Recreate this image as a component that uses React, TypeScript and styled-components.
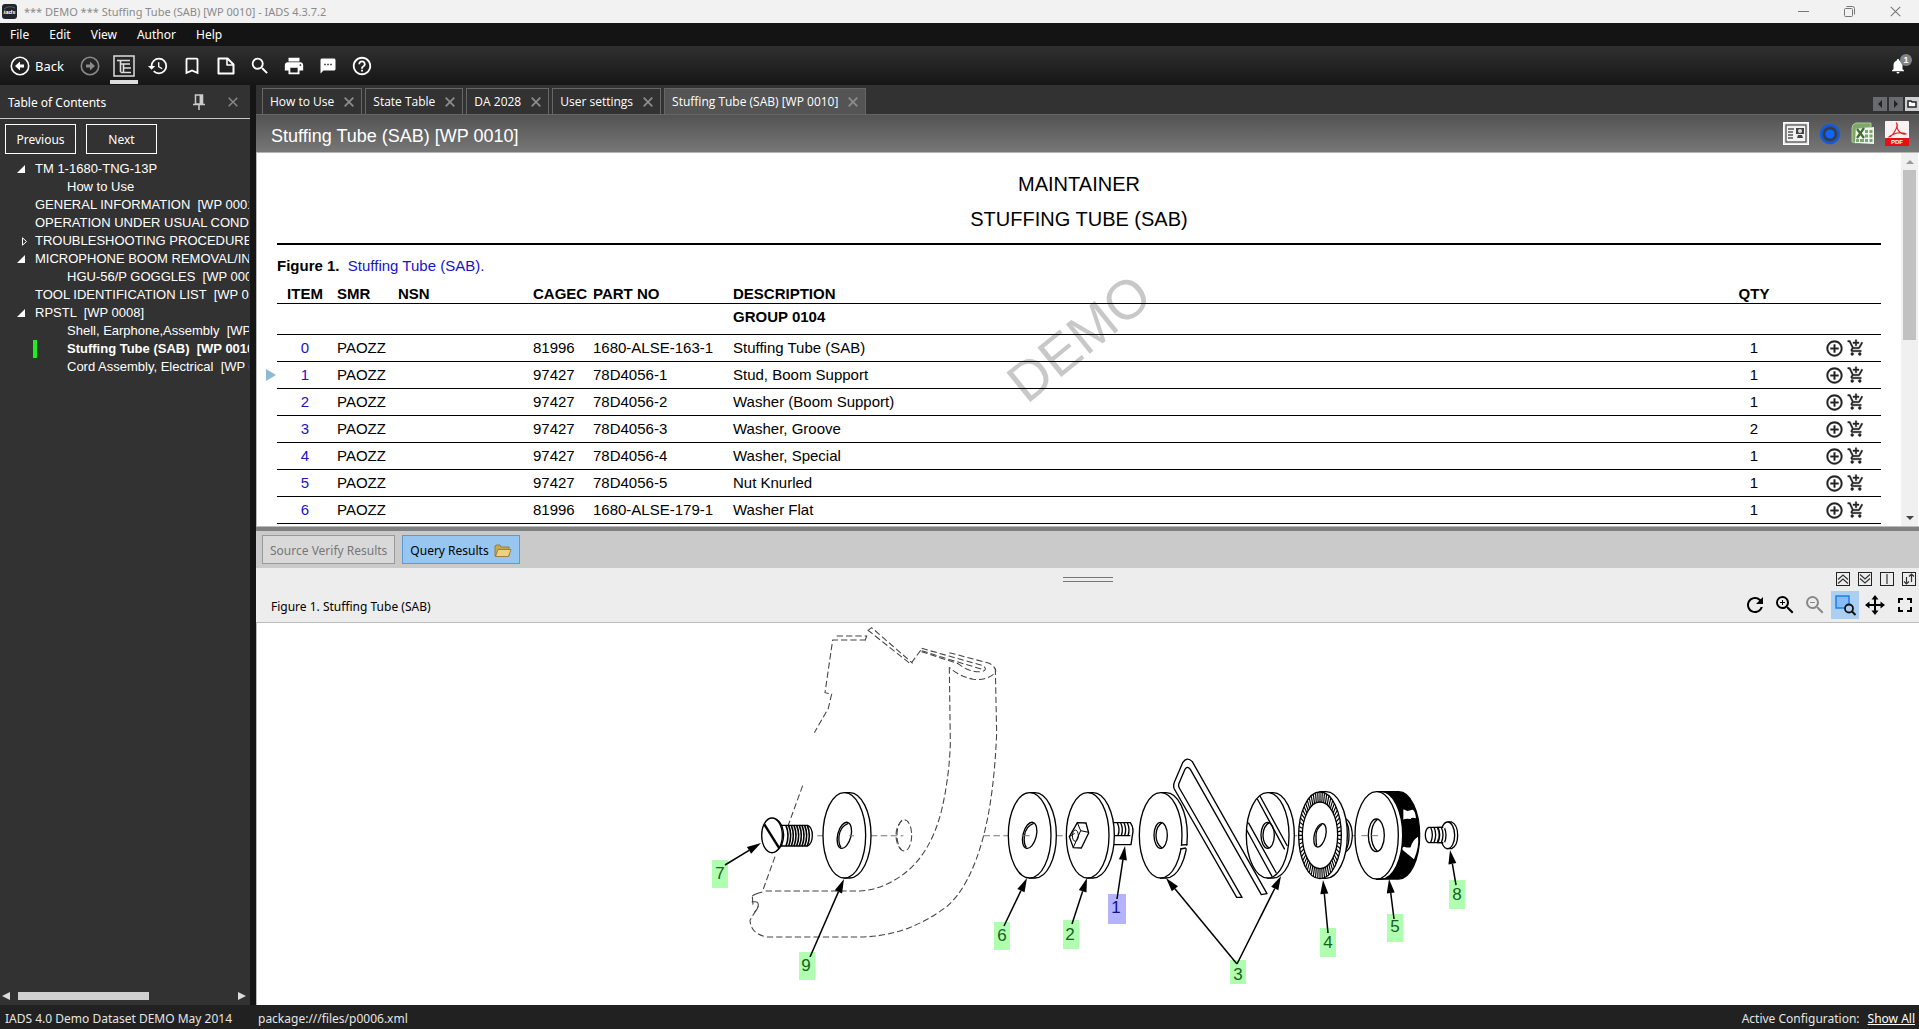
import React from "react";
import styled, { createGlobalStyle, css } from "styled-components";
import {
  MdHistory,
  MdBookmarkBorder,
  MdSearch,
  MdPrint,
  MdSms,
  MdHelpOutline,
  MdNotifications,
  MdAddCircleOutline,
  MdAddShoppingCart,
  MdRefresh,
  MdZoomIn,
  MdZoomOut,
} from "react-icons/md";

const UI = `"Noto Sans", "Open Sans", sans-serif`;
const UI_NARROW = `"Open Sans", "Noto Sans", sans-serif`;
const ARIAL = `"Liberation Sans", Arial, sans-serif`;

const Global = createGlobalStyle`
  * { box-sizing: border-box; }
  html, body, #root { height: 100%; margin: 0; }
  body { font: 12px/16px ${UI}; overflow: hidden; }
  button { font: inherit; color: inherit; background: none; border: 0; padding: 0; margin: 0; }
  a { color: inherit; text-decoration: none; }
  svg { display: block; flex: none; }
`;

const Window = styled.div`
  display: flex;
  flex-direction: column;
  height: 100vh;
  background: #151515;
  color: #fff;
`;

const TitleBar = styled.header`
  display: flex;
  align-items: center;
  gap: 7px;
  height: 23px;
  padding: 0 18px 0 2px;
  background: #f2f2f2;
  color: #8a8a8a;
  font: 11px/16px ${UI};
`;

const WindowControls = styled.div`
  display: flex;
  align-items: center;
  gap: 35px;
  margin-left: auto;
`;

const WindowButton = styled.button`
  display: grid;
  place-items: center;
  width: 11px;
  height: 11px;
  color: #777;
`;

const MenuBar = styled.nav`
  display: flex;
  align-items: center;
  gap: 20px;
  height: 23px;
  padding: 0 10px;
  background: #141414;
`;

const Toolbar = styled.div`
  display: flex;
  align-items: stretch;
  height: 39px;
  background: linear-gradient(#303030, #161616);
`;

const BackButton = styled.button`
  display: flex;
  align-items: center;
  gap: 5px;
  padding: 0 0 0 10px;
  width: 73px;
  font-size: 13px;
`;

const ToolButton = styled.button<{ $active?: boolean; $dim?: boolean }>`
  display: flex;
  align-items: center;
  justify-content: center;
  width: 34px;
  color: ${(p) => (p.$dim ? "#8a8a8a" : "#fff")};
  ${(p) =>
    p.$active &&
    css`
      background: linear-gradient(#ddd, #ddd) center bottom 1px / 28px 4px no-repeat;
    `}
`;

const Bell = styled.button`
  position: relative;
  display: grid;
  place-items: center;
  width: 18px;
  margin: 0 12px 0 auto;
`;

const Badge = styled.span`
  position: absolute;
  top: 8px;
  right: -5px;
  width: 12px;
  height: 12px;
  border-radius: 50%;
  background: #808488;
  font: bold 9px/12px ${ARIAL};
  text-align: center;
`;

const Body = styled.div`
  display: flex;
  flex: 1;
  min-height: 0;
  gap: 6px;
`;

const Sidebar = styled.aside`
  display: flex;
  flex-direction: column;
  width: 250px;
  flex: none;
  background: #323232;
`;

const SidebarHead = styled.div`
  display: flex;
  align-items: center;
  height: 34px;
  padding: 0 12px 0 8px;
  border-bottom: 1px solid #c8c8c8;
`;

const SidebarTitle = styled.h2`
  margin: 0 auto 0 0;
  padding-top: 2px;
  font-size: 12px;
  font-weight: 400;
`;

const IconButton = styled.button<{ $gap?: number }>`
  display: grid;
  place-items: center;
  margin-left: ${(p) => p.$gap ?? 0}px;
  color: #8c8c8c;
`;

const NavButtons = styled.div`
  display: flex;
  gap: 10px;
  padding: 5px 5px 6px;
`;

const NavButton = styled.button`
  width: 71px;
  height: 30px;
  padding-top: 2px;
  border: 1px solid #fff;
`;

const Tree = styled.ul`
  flex: 1;
  margin: 0 1px 0 0;
  padding: 0;
  list-style: none;
  overflow: hidden;
  font: 13px/18px ${ARIAL};
`;

const TreeRow = styled.li<{ $level: number; $current?: boolean }>`
  display: flex;
  align-items: center;
  height: 18px;
  white-space: pre;
  font-weight: ${(p) => (p.$current ? 700 : 400)};
  a {
    margin-left: ${(p) => (p.$level ? 32 : 0)}px;
  }
  ${(p) =>
    p.$current &&
    css`
      background: linear-gradient(#1cf01c, #1cf01c) 33px 0 / 4px 18px no-repeat;
    `}
`;

const Twisty = styled.span`
  display: flex;
  justify-content: center;
  width: 35px;
  padding-left: 6px;
  flex: none;
`;

const HScroll = styled.div`
  display: flex;
  align-items: center;
  gap: 8px;
  height: 19px;
  padding: 0 4px 0 2px;
  color: #ddd;
`;

const HTrack = styled.div`
  flex: 1;
  div {
    width: 62%;
    height: 8px;
    background: #d0d0d0;
  }
`;

const Main = styled.main`
  display: flex;
  flex-direction: column;
  flex: 1;
  min-width: 0;
  background: #fff;
  color: #000;
`;

const TabStrip = styled.div`
  display: flex;
  align-items: flex-end;
  gap: 3px;
  height: 30px;
  flex: none;
  padding-left: 6px;
  background: #323232;
  border-bottom: 1px solid #666;
  color: #fff;
  font-family: ${UI_NARROW};
`;

const Tab = styled.div<{ $active?: boolean }>`
  display: flex;
  align-items: center;
  gap: 10px;
  height: 26px;
  padding: 1px 7px 0;
  border: 1px solid #666;
  border-bottom: 0;
  background: ${(p) => (p.$active ? "#545454" : "#323232")};
`;

const TabNav = styled.div`
  display: flex;
  gap: 2px;
  margin: 0 0 3px auto;
`;

const TabNavButton = styled.button<{ $light?: boolean }>`
  display: grid;
  place-items: center;
  width: 14px;
  height: 14px;
  background: ${(p) => (p.$light ? "#cdd0d3" : "#696b6e")};
  color: #222;
`;

const DocHeader = styled.div`
  display: flex;
  align-items: center;
  gap: 10px;
  height: 38px;
  flex: none;
  padding: 0 10px 0 15px;
  background: linear-gradient(#535353, #777);
  border-bottom: 1px solid #b5b5b5;
  color: #fff;
`;

const DocTitle = styled.h1`
  margin: 0 auto 0 0;
  padding-top: 4px;
  font: 18px/24px ${ARIAL};
`;

const DocPane = styled.div`
  display: flex;
  flex: 0 0 373px;
  border-left: 1px solid #bbb;
  overflow: hidden;
`;

const Doc = styled.article`
  position: relative;
  flex: 1;
  min-width: 0;
  padding: 13px 20px 0;
  font: 15px/18px ${ARIAL};
`;

const DocHeading = styled.h2`
  margin: 0 0 12px;
  font: 20px/23px ${ARIAL};
  padding-top: 7px;
  height: 23px;
  text-align: center;
`;

const Rule = styled.hr`
  height: 2px;
  margin: 19px 0 12px;
  border: 0;
  background: #000;
`;

const Caption = styled.p`
  margin: 0;
  white-space: pre;
  a {
    color: #1a12c8;
  }
`;

const Watermark = styled.div`
  position: absolute;
  left: 50%;
  top: 185px;
  transform: translate(-50%, -50%) rotate(-39deg);
  font: 55px/60px ${ARIAL};
  color: #c8c8c8;
`;

const Parts = styled.table`
  position: relative;
  width: 100%;
  margin-top: 10px;
  border-collapse: collapse;
  table-layout: fixed;
  th {
    height: 18px;
    padding: 0 4px;
    text-align: left;
    border-bottom: 1px solid #000;
  }
  td {
    height: 27px;
    padding: 0 4px;
    border-bottom: 1px solid #000;
    white-space: nowrap;
  }
  th:nth-child(1),
  td:nth-child(1),
  th:nth-child(7),
  td:nth-child(7) {
    text-align: center;
  }
`;

const GroupRow = styled.tr`
  && td {
    height: 31px;
    padding-bottom: 4px;
    font-weight: 700;
  }
`;

const ItemCell = styled.td`
  position: relative;
  a {
    color: #1a12c8;
  }
`;

const Marker = styled.span`
  position: absolute;
  left: -11px;
  top: 7px;
  border: 6px solid transparent;
  border-left: 10px solid #8fb9d3;
  border-right: 0;
`;

const RowActions = styled.div`
  display: flex;
  gap: 3px;
  justify-content: flex-end;
  padding-right: 12px;
  color: #222;
  path:not([fill="none"]) {
    stroke: currentColor;
    stroke-width: 0.5px;
  }
`;

const VScroll = styled.div`
  display: flex;
  flex-direction: column;
  align-items: center;
  gap: 6px;
  width: 18px;
  padding: 7px 2px 6px;
  background: #f0f0f0;
  border-right: 1px solid #fff;
`;

const VThumb = styled.div`
  width: 13px;
  height: 170px;
  margin-bottom: auto;
  background: #c1c1c1;
`;

const Splitter = styled.div`
  height: 5px;
  flex: none;
  background: #808080;
  border-top: 1px solid #bbb;
`;

const ResultsBar = styled.div`
  display: flex;
  gap: 7px;
  align-items: flex-start;
  height: 37px;
  flex: none;
  padding: 4px 6px;
  background: #cacaca;
`;

const ResultButton = styled.button<{ $on?: boolean }>`
  display: flex;
  align-items: center;
  gap: 5px;
  height: 29px;
  padding: 2px 7px 0;
  color: ${(p) => (p.$on ? "#000" : "#777")};
  background: ${(p) => (p.$on ? "#97c6f0" : "#d9d9d9")};
  border: 1px solid ${(p) => (p.$on ? "#5a9bd6" : "#999")};
`;

const FigureHead = styled.div`
  display: grid;
  grid-template-columns: 1fr auto 1fr;
  grid-template-rows: 22px 32px;
  height: 55px;
  flex: none;
  background: #ededed;
  border-bottom: 1px solid #bbb;
`;

const Grip = styled.div`
  grid-column: 2;
  align-self: center;
  width: 50px;
  height: 5px;
  border: 1px solid #777;
  border-width: 1px 0;
`;

const PaneButtons = styled.div`
  display: flex;
  justify-content: flex-end;
  align-items: flex-end;
  gap: 8px;
  padding: 0 3px 4px 0;
`;

const PaneButton = styled.button`
  width: 14px;
  height: 14px;
  border: 1px solid #222;
  color: #333;
`;

const FigureTitle = styled.div`
  grid-column: 1 / 3;
  align-self: center;
  padding: 2px 0 0 15px;
`;

const FigureTools = styled.div`
  display: flex;
  justify-content: flex-end;
  align-items: center;
  gap: 2px;
  padding-bottom: 2px;
`;

const FigureTool = styled.button<{ $on?: boolean; $dim?: boolean }>`
  display: grid;
  place-items: center;
  width: 28px;
  height: 28px;
  color: ${(p) => (p.$dim ? "#888" : "#000")};
  background: ${(p) => (p.$on ? "#abcff0" : "transparent")};
`;

const FigureArea = styled.figure`
  display: flex;
  justify-content: center;
  flex: 1;
  min-height: 0;
  margin: 0;
  border-left: 1px solid #bbb;
`;

const StatusBar = styled.footer`
  display: flex;
  align-items: center;
  height: 24px;
  padding: 3px 4px 0 5px;
  background: #212121;
  color: #e4e4e4;
  a {
    color: #fff;
    text-decoration: underline;
  }
`;

const Dataset = styled.span`
  min-width: 253px;
`;

const ActiveConfig = styled.span`
  display: flex;
  gap: 8px;
  margin-left: auto;
`;

/* ---------- small drawn icons ---------- */

const Logo = () => (
  <svg width="15" height="15" viewBox="0 0 15 15">
    <rect width="15" height="15" rx="3" fill="#20262b" />
    <path d="M2 5Q7 1 13 4" stroke="#59636b" fill="none" />
    <text x="7.500" y="10" fill="#fff" fontFamily="Liberation Sans" fontSize="6" fontWeight="700" fontStyle="italic" textAnchor="middle">iads</text>
  </svg>
);

const CircleArrow = ({ flip }: { flip?: boolean }) => (
  <svg width="20" height="20" viewBox="0 0 20 20" transform={flip ? "scale(-1 1)" : undefined}>
    <circle cx="10" cy="10" r="8.700" fill="none" stroke="currentColor" strokeWidth="1.600" />
    <path d="M5 10l5-4.500V8.500h4v3h-4v3z" fill="currentColor" />
  </svg>
);

const TocIcon = () => (
  <svg width="22" height="22" viewBox="0 0 22 22" fill="none" stroke="#ddd">
    <rect x="1" y="1" width="20" height="20" strokeWidth="1.500" />
    <path d="M4 5.500h13M7.500 5.500v11.500M7.500 9h9.500M10.500 9v8.500M10.500 13h7.500M7.500 17.500h10.500" strokeWidth="1.600" />
  </svg>
);

const PageIcon = () => (
  <svg width="18" height="18" viewBox="0 0 18 18" fill="none" stroke="currentColor" strokeWidth="2" strokeLinejoin="round">
    <path d="M1.500 1.500h9l6 6v9h-15z" />
    <path d="M10 2v6h6" strokeWidth="1.600" />
  </svg>
);

const Cross = ({ size = 9, w = 1.6 }: { size?: number; w?: number }) => (
  <svg width={size} height={size} viewBox="0 0 10 10" stroke="currentColor" strokeWidth={w}>
    <path d="M.7 .7l8.600 8.600M9.300 .7L.7 9.300" />
  </svg>
);

const Pin = () => (
  <svg width="12" height="16" viewBox="0 0 12 16" fill="none" stroke="#ccc" strokeWidth="1.500">
    <path d="M2.500 1h7v9h-7zM0 10.500h12M6 10.500V16" />
    <path d="M7.800 1v9" strokeWidth="2.500" />
  </svg>
);

const Tri = ({ d, size = 8 }: { d: string; size?: number }) => (
  <svg width={size} height={size} viewBox="0 0 8 8" fill="currentColor">
    <path d={d} />
  </svg>
);

const CardIcon = () => (
  <svg width="26" height="24" viewBox="0 0 26 24">
    <rect x=".5" y=".5" width="25" height="22" fill="#e8e8e8" stroke="#fff" />
    <rect x="3" y="3" width="20" height="17" fill="#f2f2f2" stroke="#444" strokeWidth="1.200" />
    <path d="M5 7h6M5 10h5M5 13h5M5 16h5" stroke="#555" strokeWidth="1.500" />
    <rect x="13" y="6" width="8" height="6" fill="#444" />
    <circle cx="17" cy="9" r="2" fill="#ddd" />
    <path d="M14 16l1-3h4l1 3z" fill="#444" />
  </svg>
);

const TargetIcon = () => (
  <svg width="22" height="24" viewBox="0 0 22 24">
    <circle cx="11" cy="12" r="9" fill="#444" stroke="#0e5be6" strokeWidth="2.600" />
    <circle cx="11" cy="12" r="6.600" fill="#333b4d" />
    <circle cx="11" cy="12" r="4.600" fill="#0f66ff" />
  </svg>
);

const SheetIcon = () => (
  <svg width="24" height="24" viewBox="0 0 24 24">
    <path d="M1 20V6q0-4 4-5h15v4l-15 2v14z" fill="#7fa769" stroke="#a9c998" />
    <path d="M5 7l18-2v17L4 21z" fill="#eef4ea" />
    <path d="M14 8h3v3h-3zM18.500 8h3v3h-3zM14 12.500h3v3h-3zM18.500 12.500h3v3h-3zM14 17h3v3h-3zM18.500 17h3v3h-3zM9 17h4v3H9zM5 17h3v3H5z" fill="#79a765" />
    <path d="M6 7l7 9M13 6L6 16" stroke="#3f6b34" strokeWidth="2.200" />
  </svg>
);

const PdfIcon = () => (
  <svg width="24" height="25" viewBox="0 0 24 25">
    <rect width="24" height="25" rx="1" fill="#f8f3f2" />
    <path d="M11 2q2 0 1 5 3 7 9 6-1-2-9-1-6 2-8 4 3 0 7-8 2-5 0-6z" fill="none" stroke="#e02020" strokeWidth="1.100" />
    <rect y="17" width="24" height="8" fill="#e60f14" />
    <text x="12" y="23" fill="#fff" fontFamily="Liberation Sans" fontSize="6" fontWeight="700" textAnchor="middle">PDF</text>
  </svg>
);

const FolderIcon = () => (
  <svg width="18" height="14" viewBox="0 0 18 14" stroke="#8a7430" strokeWidth=".8">
    <path d="M1 12V2l1-1h4l1 2h8v9z" fill="#c9a94d" />
    <path d="M1.500 12.500L4 5.500h13L14.500 12.500z" fill="#ecd182" />
  </svg>
);

const MarqueeIcon = () => (
  <svg width="24" height="24" viewBox="0 0 24 24" fill="none">
    <rect x="3" y="3" width="13" height="12" fill="#84bdf7" stroke="#1d80e8" strokeWidth="1.500" />
    <circle cx="16" cy="15.500" r="4" fill="#abcff0" stroke="#111" strokeWidth="1.800" />
    <path d="M19 18.500l3.500 3.500" stroke="#111" strokeWidth="2" />
  </svg>
);

const MoveIcon = () => (
  <svg width="20" height="20" viewBox="0 0 20 20" stroke="#000" strokeWidth="2" fill="#000">
    <path d="M2 10h16M10 2v16" />
    <path d="M10 0l3.500 4.500h-7zM10 20l3.500-4.500h-7zM0 10l4.500-3.500v7zM20 10l-4.500-3.500v7z" stroke="none" />
  </svg>
);

const FullIcon = () => (
  <svg width="14" height="14" viewBox="0 0 14 14" fill="none" stroke="#000" strokeWidth="2">
    <path d="M1 5V1h4M9 1h4v4M13 9v4H9M5 13H1V9" />
  </svg>
);

const PaneGlyph = ({ d }: { d: string }) => (
  <svg width="12" height="12" viewBox="0 0 12 12" fill="none" stroke="currentColor" strokeWidth="1.200">
    <path d={d} />
  </svg>
);

/* ---------- exploded-view drawing ---------- */

type Pt = [number, number];

const Arrow = ({ from, to }: { from: Pt; to: Pt }) => {
  const a = Math.atan2(to[1] - from[1], to[0] - from[0]);
  const bx = to[0] - 14 * Math.cos(a);
  const by = to[1] - 14 * Math.sin(a);
  const ox = 4 * Math.sin(a);
  const oy = -4 * Math.cos(a);
  return (
    <g>
      <line x1={from[0]} y1={from[1]} x2={bx} y2={by} stroke="#000" strokeWidth="1.500" />
      <polygon points={`${to[0]},${to[1]} ${bx + ox},${by + oy} ${bx - ox},${by - oy}`} />
    </g>
  );
};

/* washer seen at an angle, at three units to the pixel */
const Washer = ({ cx, hole = "tilt" }: { cx: number; hole?: "tilt" | "straight" | "none" }) => (
  <g fill="#fff" stroke="#000" strokeWidth="4">
    <path d={`M${cx} 548h16a64 128 0 0 1 0 256h-16z`} />
    <ellipse cx={cx} cy="676" rx="64" ry="128" />
    {hole === "tilt" && (
      <g>
        <ellipse cx={cx} cy="676" rx="20" ry="40" transform={`rotate(14 ${cx} 676)`} />
        <path d={`M${cx + 12} 640q-24 8-28 38q-2 24 6 34`} fill="none" />
      </g>
    )}
    {hole === "straight" && (
      <g>
        <ellipse cx={cx} cy="676" rx="20" ry="39" />
        <path d={`M${cx + 4} 638q-18 12-18 38t18 38`} fill="none" />
      </g>
    )}
  </g>
);

const callouts: { n: string; x: number; y: number; w: number; h: number; tx: number; ty: number; on?: boolean }[] = [
  { n: "7", x: 712, y: 860, w: 16, h: 28, tx: 720, ty: 879 },
  { n: "9", x: 799, y: 952, w: 16, h: 28, tx: 806, ty: 971 },
  { n: "6", x: 994, y: 922, w: 16, h: 28, tx: 1002, ty: 941 },
  { n: "2", x: 1063, y: 920, w: 16, h: 29, tx: 1070, ty: 940 },
  { n: "1", x: 1108, y: 894, w: 18, h: 30, tx: 1116, ty: 913, on: true },
  { n: "3", x: 1230, y: 960, w: 16, h: 24, tx: 1238, ty: 980 },
  { n: "4", x: 1320, y: 928, w: 16, h: 29, tx: 1328, ty: 948 },
  { n: "5", x: 1387, y: 914, w: 16, h: 28, tx: 1395, ty: 932 },
  { n: "8", x: 1449, y: 880, w: 16, h: 29, tx: 1457, ty: 900 },
];

const arrows: [Pt, Pt][] = [
  [[725, 865], [761, 843]],
  [[810, 957], [844, 879]],
  [[1004, 926], [1027, 878]],
  [[1072, 924], [1087, 878]],
  [[1117, 899], [1125, 846]],
  [[1237, 964], [1166, 878]],
  [[1237, 964], [1281, 876]],
  [[1328, 933], [1323, 880]],
  [[1394, 919], [1389, 879]],
  [[1456, 885], [1450, 850]],
];

const ticks = Array.from({ length: 60 }, (_, i) => {
  const a = (i / 60) * Math.PI * 2;
  return `M${360 + 53 * Math.cos(a)} ${286 + 100 * Math.sin(a)}L${360 + 64 * Math.cos(a)} ${286 + 128 * Math.sin(a)}`;
}).join("");

const Exploded = () => (
  <svg width="761" height="382" viewBox="708 623 761 382" role="img" aria-label="Stuffing tube exploded view">
    {callouts.map((c) => (
      <rect key={c.n} x={c.x} y={c.y} width={c.w} height={c.h} fill={c.on ? "#b3b3ff" : "#b0ffb0"} />
    ))}
    {/* boom outline, hole and axis */}
    <g transform="translate(720 610) scale(.33333)" fill="none" stroke="#444" strokeWidth="3.200">
      <g strokeDasharray="19 9">
        <path d="M438 90H338L315 248l20 4-10 43-42 73" />
        <path d="M350 78h90l-5 14" />
        <path d="M443 62l12-9 123 107M443 60l129 102 33-45" />
        <path d="M605 115l85 24 100 28q14 12-4 18-36 4-72-24l-109-36" />
        <path d="M605 122l62 20 120 36" />
        <path d="M688 128l120 32q24 14 18 28-24 24-66 20-45-10-72-36" />
        <path d="M688 172l3 228q-3 100-26 200-35 140-125 200-60 40-120 43H135" />
        <path d="M826 176l4 194q-8 190-40 310-40 150-110 210-120 90-260 91H140q-48-10-50-50l25-42" />
        <path d="M248 527l-43 118M165 740l-38 105" />
        <ellipse cx="553" cy="676" rx="22" ry="47" />
        <path d="M546 630q-18 20-18 46t16 44" />
      </g>
      <path d="M127 846q-24 6-30 12M95 876q20-4 20 8 0 10-12 24M97 860l2 24" />
      <path d="M292 677h16M452 677h98M790 677h74M1008 677h30M1332 677h44M1592 677h450M2325 677h25M2370 677h25M2890 677h20" stroke="#777" strokeDasharray="20 10" />
      <Washer cx={373} />
      <Washer cx={929} />
      <path d="M388 677h14M905 677h24" stroke="#777" />
      {/* slotted screw */}
      <g stroke="#000" strokeWidth="4" fill="#fff">
        <path d="M185 646h78q14 6 14 30t-14 32h-78z" />
        <path d="M198 646q12 30 0 62M206 646q12 30 0 62M214 646q12 30 0 62M222 646q12 30 0 62M230 646q12 30 0 62M238 646q12 30 0 62M246 646q12 30 0 62M254 646q12 30 0 62M262 646q12 30 0 62" fill="none" strokeWidth="5" />
        <path d="M157 625q30 2 34 50-2 44-34 53z" />
        <ellipse cx="156" cy="676" rx="31" ry="52" />
        <path d="M133 643l45 72" fill="none" strokeWidth="7" />
      </g>
    </g>
    {/* stud, boom washer, split washer and clip */}
    <g transform="translate(980 740) scale(.33333)" fill="#fff" stroke="#000" strokeWidth="4">
      <path d="M395 248h56q8 10 8 26l-6 40h-58z" />
      <path d="M395 287h56M412 248q9 20 2 38M422 248q9 20 2 38M432 248q9 20 2 38M442 248q9 20 2 38" fill="none" />
      <g transform="translate(0 -390)"><Washer cx={323} hole="none" /></g>
      <path d="M268 290l24-42 26 1 8 30-22 45-24-1z" />
      <path d="M292 248l10 24-22 50M302 272l24 5M268 290l16-10" fill="none" strokeWidth="3" />
      <ellipse cx="286" cy="287" rx="9" ry="17" strokeWidth="3" fill="none" />
      <g transform="translate(0 -390)"><Washer cx={542} hole="straight" /></g>
      <path d="M598 317h26v8h-26z" stroke="none" />
      <path d="M603 315l19-1M601 327l17-3" />
      <g transform="translate(0 -390)"><Washer cx={863} hole="straight" /></g>
      <path d="M832 177l82 151M840 168l82 150M800 270l76 139M805 248l84 151" fill="none" />
      <path
        fillRule="evenodd"
        d="M770 472L583 147q-4-9 0-20l25-59q13-20 29-3l224 396-17 3L631 88q-9-12-16 0l-18 42q-3 8 1 14l188 328z"
        strokeLinejoin="round"
      />
    </g>
    {/* knurled washers and end screw */}
    <g transform="translate(1200 740) scale(.33333)" fill="#fff" stroke="#000" strokeWidth="4">
      <path d="M425 232q30 4 32 54-2 50-30 52z" />
      <path d="M435 240q12 14 12 46t-10 44" fill="none" />
      <path d="M360 155h18a64 130 0 0 1 0 260h-18z" />
      <ellipse cx="360" cy="286" rx="64" ry="130" />
      <path d={ticks} strokeWidth="3.500" />
      <ellipse cx="360" cy="286" rx="53" ry="100" />
      <ellipse cx="360" cy="286" rx="17" ry="36" transform="rotate(14 360 286)" />
      <path d="M366 253q-18 14-18 34t2 30" fill="none" />
      <path d="M530 155h66a63 131 0 0 1 0 262h-66z" fill="#000" />
      <path d="M610 208l12 5 16-4q8 4 10 26-14-4-16 2-18-2-22 2zM654 290q4 30-12 68l-34-28q-4-8 4-10 14 4 20 2 4-20 22-32z" stroke="none" />
      <path d="M530 155h14a64 131 0 0 1 0 262h-14z" />
      <ellipse cx="530" cy="286" rx="65" ry="131" />
      <ellipse cx="529" cy="286" rx="24" ry="49" />
      <path d="M532 238q-18 16-18 48t18 48" fill="none" />
      <path d="M484 287h50" stroke="#777" strokeWidth="3" strokeDasharray="20 10" />
      <path d="M740 262h-54q-10 6-10 23t10 23h54z" />
      <path d="M692 262q10 22 0 46M702 262q10 22 0 46M712 262q10 22 0 46" fill="none" />
      <path d="M745 246h10q18 8 18 40t-18 40h-14z" />
      <ellipse cx="743" cy="286" rx="21" ry="40" />
      <path d="M716 264h16v44h-16z" stroke="none" />
      <path d="M714 262q10 22 0 46M724 262q10 22 0 46M734 265q8 20 0 42M712 262h18M712 308h18" fill="none" />
    </g>
    {arrows.map(([from, to], i) => (
      <Arrow key={i} from={from} to={to} />
    ))}
    {callouts.map((c) => (
      <a key={c.n} href={`#item-${c.n}`}>
        <text x={c.tx} y={c.ty} textAnchor="middle" fontFamily="Liberation Sans, Arial, sans-serif" fontSize="17" fill={c.on ? "#10108a" : "#17601f"}>
          {c.n}
        </text>
      </a>
    ))}
  </svg>
);

/* ---------- data ---------- */

const OPEN = "M8 0v8H0z";
const CLOSED = "closed";

const tree: { label: string; level: number; twisty?: string; current?: boolean }[] = [
  { label: "TM 1-1680-TNG-13P", level: 0, twisty: OPEN },
  { label: "How to Use", level: 1 },
  { label: "GENERAL INFORMATION  [WP 0001]", level: 0 },
  { label: "OPERATION UNDER USUAL CONDITIONS", level: 0 },
  { label: "TROUBLESHOOTING PROCEDURES", level: 0, twisty: CLOSED },
  { label: "MICROPHONE BOOM REMOVAL/INSTALL", level: 0, twisty: OPEN },
  { label: "HGU-56/P GOGGLES  [WP 0006]", level: 1 },
  { label: "TOOL IDENTIFICATION LIST  [WP 0007]", level: 0 },
  { label: "RPSTL  [WP 0008]", level: 0, twisty: OPEN },
  { label: "Shell, Earphone,Assembly  [WP 0009]", level: 1 },
  { label: "Stuffing Tube (SAB)  [WP 0010]", level: 1, current: true },
  { label: "Cord Assembly, Electrical  [WP 0011]", level: 1 },
];

const tabs = ["How to Use", "State Table", "DA 2028", "User settings", "Stuffing Tube (SAB) [WP 0010]"];

const parts = [
  ["0", "81996", "1680-ALSE-163-1", "Stuffing Tube (SAB)", "1"],
  ["1", "97427", "78D4056-1", "Stud, Boom Support", "1"],
  ["2", "97427", "78D4056-2", "Washer (Boom Support)", "1"],
  ["3", "97427", "78D4056-3", "Washer, Groove", "2"],
  ["4", "97427", "78D4056-4", "Washer, Special", "1"],
  ["5", "97427", "78D4056-5", "Nut Knurled", "1"],
  ["6", "81996", "1680-ALSE-179-1", "Washer Flat", "1"],
];

export default function App() {
  return (
    <Window>
      <Global />
      <TitleBar>
        <Logo />
        <span>*** DEMO *** Stuffing Tube (SAB) [WP 0010] - IADS 4.3.7.2</span>
        <WindowControls>
          <WindowButton aria-label="Minimize">
            <svg width="11" height="11" stroke="currentColor"><path d="M0 5.500h11" /></svg>
          </WindowButton>
          <WindowButton aria-label="Restore">
            <svg width="11" height="11" fill="none" stroke="currentColor">
              <rect x=".5" y="2.500" width="8" height="8" rx="1" />
              <path d="M2.500 .5h6q2 0 2 2v6" />
            </svg>
          </WindowButton>
          <WindowButton aria-label="Close"><Cross size={11} w={1} /></WindowButton>
        </WindowControls>
      </TitleBar>
      <MenuBar>
        {["File", "Edit", "View", "Author", "Help"].map((m) => (
          <button key={m}>{m}</button>
        ))}
      </MenuBar>
      <Toolbar>
        <BackButton><CircleArrow />Back</BackButton>
        <ToolButton $dim aria-label="Forward"><CircleArrow flip /></ToolButton>
        <ToolButton $active aria-label="Table of contents"><TocIcon /></ToolButton>
        <ToolButton aria-label="History"><MdHistory size={22} /></ToolButton>
        <ToolButton aria-label="Bookmarks"><MdBookmarkBorder size={22} /></ToolButton>
        <ToolButton aria-label="Notes"><PageIcon /></ToolButton>
        <ToolButton aria-label="Search"><MdSearch size={22} /></ToolButton>
        <ToolButton aria-label="Print"><MdPrint size={22} /></ToolButton>
        <ToolButton aria-label="Comments"><MdSms size={18} /></ToolButton>
        <ToolButton aria-label="Help"><MdHelpOutline size={22} /></ToolButton>
        <Bell aria-label="Notifications">
          <MdNotifications size={18} />
          <Badge>1</Badge>
        </Bell>
      </Toolbar>
      <Body>
        <Sidebar>
          <SidebarHead>
            <SidebarTitle>Table of Contents</SidebarTitle>
            <IconButton aria-label="Pin"><Pin /></IconButton>
            <IconButton aria-label="Close panel" $gap={23}><Cross size={10} w={1.4} /></IconButton>
          </SidebarHead>
          <NavButtons>
            <NavButton>Previous</NavButton>
            <NavButton>Next</NavButton>
          </NavButtons>
          <Tree>
            {tree.map((t) => (
              <TreeRow key={t.label} $level={t.level} $current={t.current}>
                <Twisty>
                  {t.twisty === OPEN && <Tri d={OPEN} />}
                  {t.twisty === CLOSED && (
                    <svg width="14" height="9" viewBox="0 0 14 9" fill="none" stroke="#fff"><path d="M8.500 .8v7.400l4-3.700z" /></svg>
                  )}
                </Twisty>
                <a href="#doc">{t.label}</a>
              </TreeRow>
            ))}
          </Tree>
          <HScroll>
            <Tri d="M8 0v8L0 4z" />
            <HTrack><div /></HTrack>
            <Tri d="M0 0v8l8-4z" />
          </HScroll>
        </Sidebar>
        <Main>
          <TabStrip>
            {tabs.map((t, i) => (
              <Tab key={t} $active={i === 4}>
                <button>{t}</button>
                <IconButton aria-label={`Close ${t}`}><Cross size={10} w={1.8} /></IconButton>
              </Tab>
            ))}
            <TabNav>
              <TabNavButton aria-label="Scroll tabs left"><Tri d="M6 0v8L2 4z" /></TabNavButton>
              <TabNavButton aria-label="Scroll tabs right"><Tri d="M2 0v8l4-4z" /></TabNavButton>
              <TabNavButton $light aria-label="Tab list">
                <svg width="10" height="10" fill="#fff" stroke="#222" strokeWidth="1.500"><path d="M1 2h3l1 1h4v5H1z" /></svg>
              </TabNavButton>
            </TabNav>
          </TabStrip>
          <DocHeader>
            <DocTitle>Stuffing Tube (SAB) [WP 0010]</DocTitle>
            <IconButton aria-label="Details"><CardIcon /></IconButton>
            <IconButton aria-label="Locate"><TargetIcon /></IconButton>
            <IconButton aria-label="Export to spreadsheet"><SheetIcon /></IconButton>
            <IconButton aria-label="Export to PDF"><PdfIcon /></IconButton>
          </DocHeader>
          <DocPane>
            <Doc id="doc">
              <Watermark>DEMO</Watermark>
              <DocHeading>MAINTAINER</DocHeading>
              <DocHeading>STUFFING TUBE (SAB)</DocHeading>
              <Rule />
              <Caption><b>Figure 1.</b>{"  "}<a href="#figure">Stuffing Tube (SAB).</a></Caption>
              <Parts>
                <colgroup>
                  <col width="56" /><col width="61" /><col width="135" /><col width="60" />
                  <col width="140" /><col /><col width="80" /><col width="87" />
                </colgroup>
                <thead>
                  <tr>
                    <th>ITEM</th><th>SMR</th><th>NSN</th><th>CAGEC</th>
                    <th>PART NO</th><th>DESCRIPTION</th><th>QTY</th><th />
                  </tr>
                </thead>
                <tbody>
                  <GroupRow><td colSpan={5} /><td colSpan={3}>GROUP 0104</td></GroupRow>
                  {parts.map(([n, cage, part, desc, qty]) => (
                    <tr key={n}>
                      <ItemCell>{n === "1" && <Marker />}<a href={`#item-${n}`}>{n}</a></ItemCell>
                      <td>PAOZZ</td>
                      <td />
                      <td>{cage}</td>
                      <td>{part}</td>
                      <td>{desc}</td>
                      <td>{qty}</td>
                      <td>
                        <RowActions>
                          <button aria-label={`Add item ${n}`}><MdAddCircleOutline size={19} /></button>
                          <button aria-label={`Order item ${n}`}><MdAddShoppingCart size={18} /></button>
                        </RowActions>
                      </td>
                    </tr>
                  ))}
                </tbody>
              </Parts>
            </Doc>
            <VScroll>
              <svg width="8" height="4"><path d="M0 4h8L4 0z" fill="#999" /></svg>
              <VThumb />
              <svg width="8" height="4"><path d="M0 0h8L4 4z" fill="#444" /></svg>
            </VScroll>
          </DocPane>
          <Splitter />
          <ResultsBar>
            <ResultButton>Source Verify Results</ResultButton>
            <ResultButton $on>Query Results <FolderIcon /></ResultButton>
          </ResultsBar>
          <FigureHead id="figure">
            <Grip />
            <PaneButtons>
              <PaneButton aria-label="Collapse up"><PaneGlyph d="M1 6.500l5-4.500 5 4.500M1 10.500l5-4.500 5 4.500" /></PaneButton>
              <PaneButton aria-label="Collapse down"><PaneGlyph d="M1 1.500l5 4.500 5-4.500M1 5.500l5 4.500 5-4.500" /></PaneButton>
              <PaneButton aria-label="Split panes"><PaneGlyph d="M6 1v10" /></PaneButton>
              <PaneButton aria-label="Swap panes"><PaneGlyph d="M3.500 4v7M1 8.500l2.500 2.500L6 8.500M8.500 9V1M6 3.500L8.500 1 11 3.500" /></PaneButton>
            </PaneButtons>
            <FigureTitle>Figure 1. Stuffing Tube (SAB)</FigureTitle>
            <FigureTools>
              <FigureTool aria-label="Reset"><MdRefresh size={24} /></FigureTool>
              <FigureTool aria-label="Zoom in"><MdZoomIn size={24} /></FigureTool>
              <FigureTool $dim aria-label="Zoom out"><MdZoomOut size={24} /></FigureTool>
              <FigureTool $on aria-label="Zoom area"><MarqueeIcon /></FigureTool>
              <FigureTool aria-label="Pan"><MoveIcon /></FigureTool>
              <FigureTool aria-label="Full screen"><FullIcon /></FigureTool>
            </FigureTools>
          </FigureHead>
          <FigureArea><Exploded /></FigureArea>
        </Main>
      </Body>
      <StatusBar>
        <Dataset>IADS 4.0 Demo Dataset DEMO May 2014</Dataset>
        <span>package:///files/p0006.xml</span>
        <ActiveConfig>Active Configuration: <a href="#all">Show All</a></ActiveConfig>
      </StatusBar>
    </Window>
  );
}
